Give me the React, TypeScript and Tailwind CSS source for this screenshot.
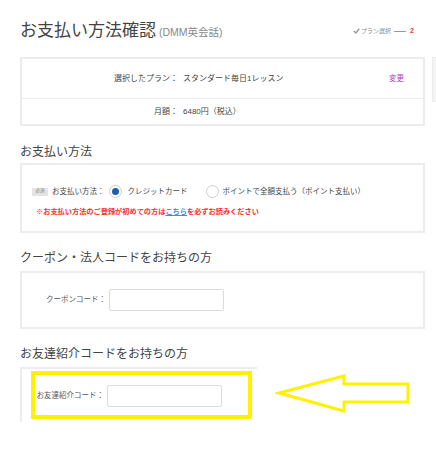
import React from 'react';

const jp = { fontFamily: '"Liberation Sans", "Noto Sans CJK JP", sans-serif' };

function Radio({ checked }: { checked?: boolean }) {
  return (
    <span className="w-[13px] h-[13px] rounded-full border border-[#cfcfcf] bg-white flex items-center justify-center shrink-0">
      {checked && <span className="w-[7px] h-[7px] rounded-full bg-[#1a5fb4]" />}
    </span>
  );
}

function CodeInput() {
  return <div className="w-[115px] h-[22px] border border-[#dcdcdc] rounded-[2px] bg-white shrink-0" />;
}

export default function App() {
  return (
    <div className="relative w-[436px] h-[450px] overflow-hidden bg-white text-[#333]" style={jp}>
      {/* header */}
      <div className="flex items-center pt-[21px] h-[41px]">
        <div className="w-[353px] shrink-0 pl-[20px] flex items-baseline whitespace-nowrap">
          <h1 className="text-[17px] leading-[20px] text-[#444] font-normal">お支払い方法確認</h1>
          <span className="ml-[3px] text-[10.5px] text-[#888]">(DMM英会話)</span>
        </div>
        <div className="flex items-center whitespace-nowrap shrink-0">
          <svg width="7" height="6" viewBox="0 0 7 6" className="mr-[1px]">
            <path d="M0.8 3 L2.8 5 L6.2 0.8" fill="none" stroke="#999" strokeWidth="1.4" />
          </svg>
          <span className="text-[6px] text-[#888]">プラン選択</span>
          <span className="ml-[3px] w-[12px] h-px bg-[#999]" />
          <span className="ml-[4px] text-[7px] font-bold text-[#e0394a]">2</span>
        </div>
      </div>

      <div className="flex">
        <main className="ml-[20px] w-[405px] shrink-0">
          {/* plan */}
          <div className="mt-[16px] border-2 border-[#ececec]">
            <div className="h-[40px] flex items-center border-b border-[#ececec] text-[8px] text-[#444]">
              <span className="w-[156px] text-right">選択したプラン：</span>
              <span className="pl-[5px]">スタンダード毎日1レッスン</span>
              <span className="ml-auto mr-[19px] text-[7.5px] text-[#b03cc4]">変更</span>
            </div>
            <div className="h-[25px] flex items-center text-[8px] text-[#444]">
              <span className="w-[156px] text-right">月額：</span>
              <span className="pl-[5px]">6480円（税込）</span>
            </div>
          </div>

          {/* payment method */}
          <h2 className="mt-[18px] mb-[3px] text-[12px] leading-[16px] font-normal text-[#444]">お支払い方法</h2>
          <div className="border-2 border-[#ececec] pt-[20px] pb-[14px] pl-[10px]">
            <div className="flex items-center text-[7.5px] text-[#444] whitespace-nowrap">
              <span className="w-[16px] h-[8px] bg-[#e4e4e4] text-[4.5px] text-[#888] flex items-center justify-center">必須</span>
              <span className="ml-[4px]">お支払い方法：</span>
              <span className="ml-[4px]"><Radio checked /></span>
              <span className="ml-[6px]">クレジットカード</span>
              <span className="ml-[18px]"><Radio /></span>
              <span className="ml-[4px]">ポイントで全額支払う（ポイント支払い）</span>
            </div>
            <p className="mt-[9px] ml-[4px] text-[7.2px] leading-[10px] font-bold text-[#ff2a2a] whitespace-nowrap">
              ※お支払い方法のご登録が初めての方は
              <span className="text-[#3a8ee6] underline">こちら</span>
              を必ずお読みください
            </p>
          </div>

          {/* coupon */}
          <h2 className="mt-[17px] mb-[5px] text-[12px] leading-[16px] font-normal text-[#444]">クーポン・法人コードをお持ちの方</h2>
          <div className="border-2 border-[#ececec] py-[16px] flex items-center">
            <span className="w-[84px] text-right text-[7.5px] text-[#555]">クーポンコード：</span>
            <span className="ml-[3px]"><CodeInput /></span>
          </div>

          {/* friend */}
          <h2 className="mt-[17px] mb-[5px] text-[12px] leading-[16px] font-normal text-[#444]">お友達紹介コードをお持ちの方</h2>
          <div className="relative w-[237px] h-[55px] border-t-2 border-l-2 border-[#ececec] pt-[16px] flex items-start">
            <span className="w-[82px] h-[22px] flex items-center justify-end text-[7.5px] text-[#555] whitespace-nowrap">お友達紹介コード：</span>
            <span className="ml-[3px]"><CodeInput /></span>
            <div className="absolute left-[9px] top-[2px] w-[221px] h-[48px] border-4 border-[#fff200]" />
          </div>
        </main>
        <aside className="ml-[7px] mt-[16px] w-[40px] h-[45px] bg-[#f4f4f4] border border-[#ececec] shrink-0" />
      </div>

      {/* annotation arrow */}
      <svg className="absolute left-[275px] top-[372px]" width="138" height="44" viewBox="0 0 138 44">
        <polygon
          points="4,21 69,4 69,12 133,12 133,30 69,30 69,39"
          fill="none"
          stroke="#fff200"
          strokeWidth="3"
        />
      </svg>
    </div>
  );
}
